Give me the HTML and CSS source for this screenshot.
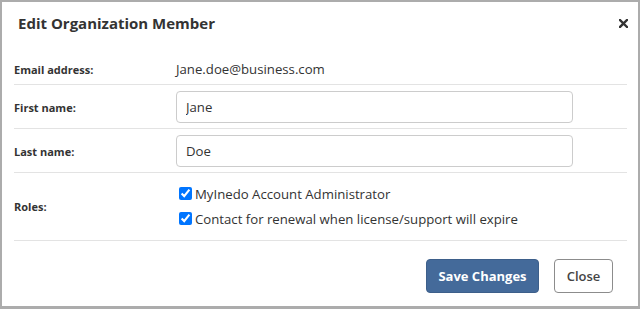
FILE: index.html
```html
<!DOCTYPE html>
<html lang="en">
<head>
<meta charset="utf-8">
<title>Edit Organization Member</title>
<link rel="stylesheet" href="styles.css">
</head>
<body>
<div class="dialog">
  <div class="header">
    <h1 class="title">Edit Organization Member</h1>
    <button class="close-x" type="button" aria-label="Close">
      <svg width="9" height="9" viewBox="0 0 9 9"><path d="M1 1 L8 8 M8 1 L1 8" stroke="#333" stroke-width="2.4" stroke-linecap="square"/></svg>
    </button>
  </div>
  <div class="body">
    <div class="row row-email">
      <div class="label">Email address:</div>
      <div class="value">Jane.doe@business.com</div>
    </div>
    <div class="row">
      <div class="label">First name:</div>
      <div class="value"><input class="input" type="text" value="Jane"></div>
    </div>
    <div class="row">
      <div class="label">Last name:</div>
      <div class="value"><input class="input" type="text" value="Doe"></div>
    </div>
    <div class="row row-roles">
      <div class="label">Roles:</div>
      <div class="value">
        <label class="check"><input type="checkbox" checked> MyInedo Account Administrator</label>
        <label class="check"><input type="checkbox" checked> Contact for renewal when license/support will expire</label>
      </div>
    </div>
  </div>
  <div class="footer">
    <button class="btn btn-primary" type="button">Save Changes</button>
    <button class="btn btn-default" type="button">Close</button>
  </div>
</div>
</body>
</html>
```
FILE: styles.css
```css
* { box-sizing: border-box; }
html, body { margin: 0; padding: 0; background: #fff; }
body {
  font-family: "Open Sans", "Noto Sans", sans-serif;
  color: #333;
  width: 640px;
  height: 309px;
}
.dialog {
  width: 640px;
  height: 309px;
  border: 2px solid #acacac;
  border-bottom-width: 3px;
  background: #fff;
}
.header {
  display: flex;
  justify-content: space-between;
  align-items: flex-start;
  padding: 10px 10px 0 16px;
}
.title {
  margin: 0;
  font-size: 15px;
  line-height: 22px;
  font-weight: 700;
  color: #333;
}
.close-x {
  border: 0;
  background: none;
  padding: 0;
  margin-top: 7px;
  width: 9px;
  height: 9px;
  display: flex;
}
.body {
  margin-top: 19px;
  padding: 0 11px 0 12px;
}
.row {
  display: grid;
  grid-template-columns: 162px 1fr;
  align-items: center;
  border-bottom: 1px solid #e3e3e3;
  padding: 6px 0 5px;
}
.row-email .value { line-height: 20px; }
.label {
  font-size: 11px;
  font-weight: 700;
  color: #333;
}
.value {
  font-size: 13.2px;
  color: #333;
}
.input {
  width: 397px;
  height: 32px;
  border: 1px solid #ccc;
  border-radius: 4px;
  padding: 0 9px;
  font-family: inherit;
  font-size: 13.2px;
  color: #333;
}
.row-roles { padding: 8px 0 9px; }
.check {
  display: flex;
  align-items: center;
  height: 25px;
  gap: 3px;
}
.check input {
  margin: 0 0 0 3px;
  width: 13px;
  height: 13px;
  accent-color: #0075ff;
}
.footer {
  display: flex;
  justify-content: flex-end;
  gap: 15px;
  padding: 18px 25px 0 0;
}
.btn {
  height: 34px;
  border-radius: 4px;
  font-family: inherit;
  font-size: 13px;
  font-weight: 600;
  padding: 0;
  white-space: nowrap;
}
.btn-primary {
  width: 113px;
  background: #446a9a;
  border: 1px solid #3d5f8a;
  color: #fff;
  font-weight: 700;
}
.btn-default {
  width: 59px;
  background: #fff;
  border: 1px solid #8c8c8c;
  color: #444;
}
```
